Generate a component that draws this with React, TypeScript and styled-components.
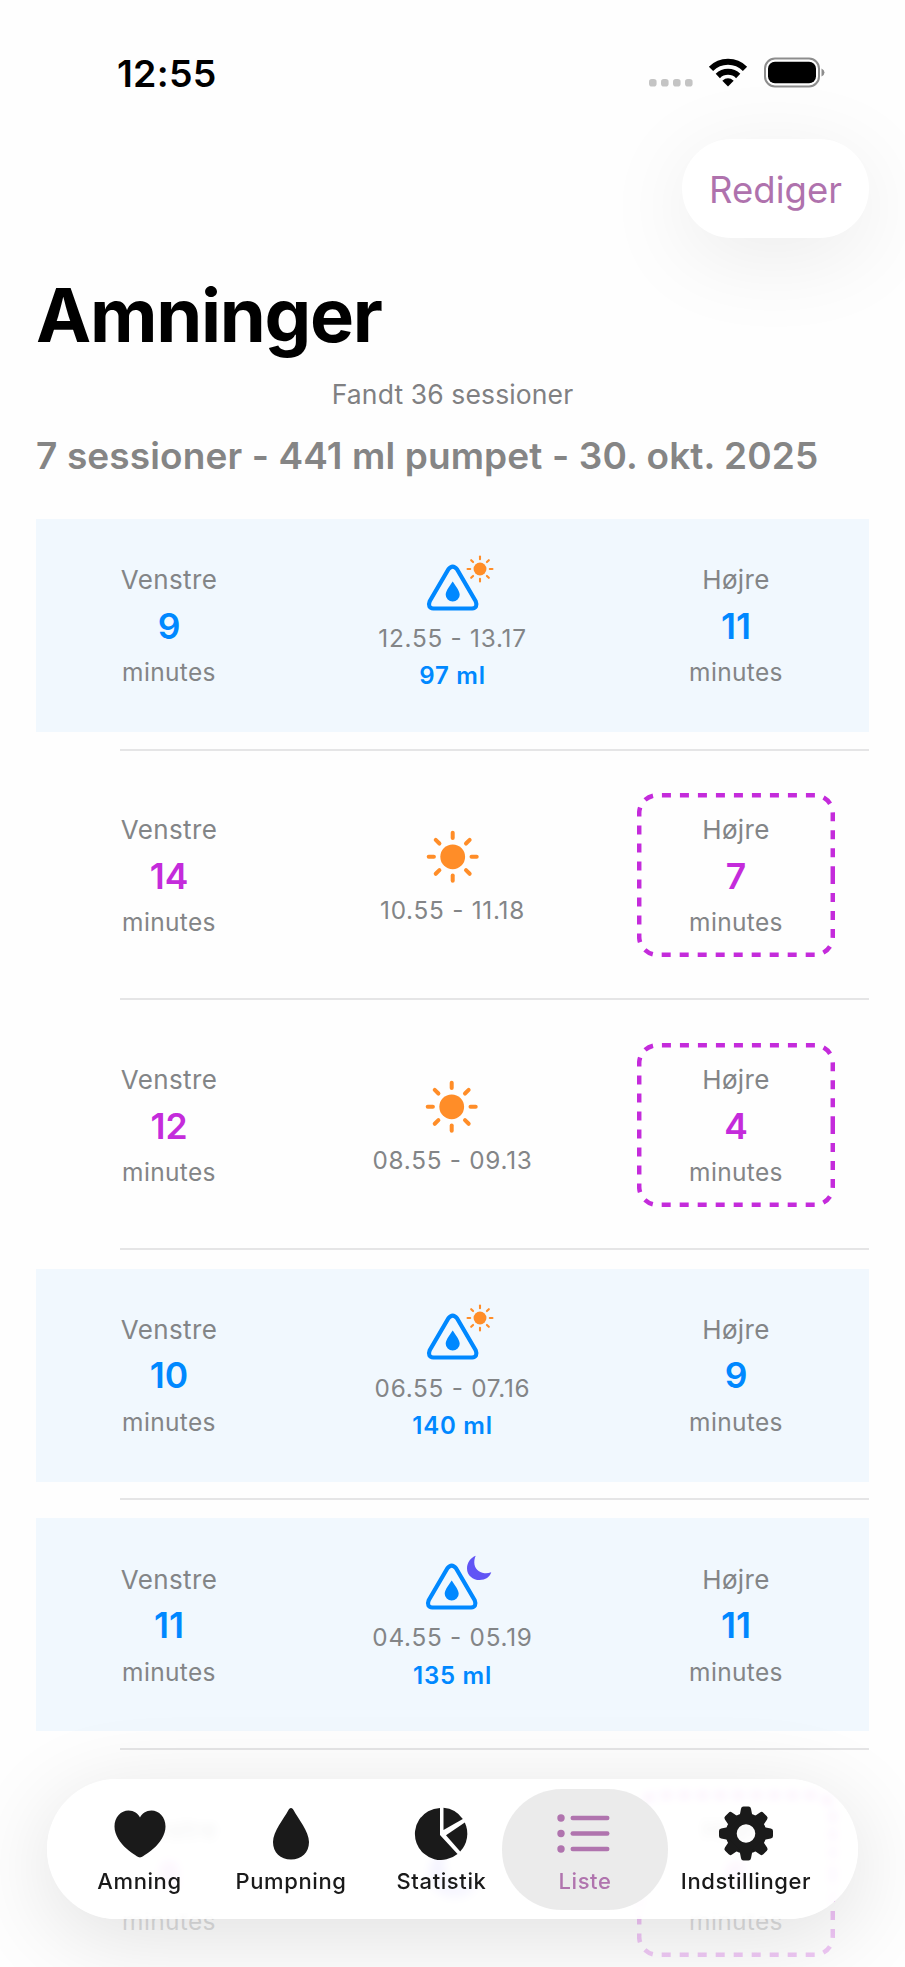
import React from 'react';
import styled, { createGlobalStyle } from 'styled-components';

const Global = createGlobalStyle`
  * { box-sizing: border-box; }
  body { margin: 0; background: #fff; font-family: Inter, "Liberation Sans", sans-serif; }
`;

const Screen = styled.main`
  position: relative;
  width: 905px;
  height: 1967px;
  overflow: hidden;
  background: #fefefe;
  color: #000;
`;

const StatusBar = styled.header`
  display: flex;
  justify-content: space-between;
  align-items: center;
  height: 139px;
  padding: 9px 80px 0 117px;
`;

const Clock = styled.span`
  font-size: 37.5px;
  line-height: 46px;
  font-weight: 600;
  letter-spacing: 0.25px;
`;

const Toolbar = styled.div`
  display: flex;
  justify-content: flex-end;
  padding-right: 36px;
`;

const EditButton = styled.button`
  width: 187px;
  height: 99px;
  padding: 2px 0 0;
  border: 0;
  border-radius: 50px;
  background: #fff;
  box-shadow: 0 18px 90px rgba(0, 0, 0, 0.08);
  color: #af72ad;
  font: 400 36.5px/46px Inter, sans-serif;
`;

const Title = styled.h1`
  margin: 32px 0 0 36px;
  font-size: 74px;
  line-height: 90px;
  font-weight: 700;
  letter-spacing: -1.3px;
`;

const Found = styled.p`
  margin: 18px 0 0;
  text-align: center;
  color: #808082;
  font-size: 26.5px;
  line-height: 32px;
  letter-spacing: 0.12px;
`;

const DayHeading = styled.h2`
  margin: 23px 0 0 36px;
  white-space: nowrap;
  color: #858585;
  font-size: 37px;
  line-height: 46px;
  font-weight: 600;
  letter-spacing: 0.12px;
`;

const List = styled.ul`
  list-style: none;
  margin: 22px 36px 0;
  padding: 0;
`;

const Item = styled.li`
  display: flex;
  flex-direction: column;
  height: 249.86px;
  padding-top: 18px;
`;

const Card = styled.div<{ $tinted: boolean }>`
  display: flex;
  justify-content: space-between;
  align-items: center;
  height: 213px;
  padding: 0 34px;
  background: ${(p) => (p.$tinted ? '#f1f8fe' : 'transparent')};
`;

const Divider = styled.div`
  height: 2px;
  margin: 16.5px 0 0 84px;
  background: #e5e5e6;
`;

const Side = styled.div`
  position: relative;
  display: flex;
  flex-direction: column;
  align-items: center;
  justify-content: center;
  gap: 6.4px;
  width: 198px;
  height: 164px;
  padding-top: 0.6px;
`;

const SideLabel = styled.span`
  color: #838587;
  font-size: 26px;
  line-height: 34px;
  letter-spacing: 0.35px;
`;

const Minutes = styled.span<{ $pump: boolean }>`
  color: ${(p) => (p.$pump ? '#0088ff' : '#c42bdb')};
  font-size: 35.5px;
  line-height: 46px;
  font-weight: 600;
`;

const Unit = styled.span`
  color: #838587;
  font-size: 24.5px;
  line-height: 32px;
  letter-spacing: 0.35px;
`;

const Outline = styled.svg`
  position: absolute;
  inset: 0;
`;

const Middle = styled.div`
  display: flex;
  flex-direction: column;
  align-items: center;
  gap: 6.3px;
`;

const Time = styled.span`
  color: #838587;
  font-size: 24.3px;
  line-height: 32px;
  letter-spacing: 0.75px;
`;

const Volume = styled.span`
  color: #0088ff;
  font-size: 24px;
  line-height: 32px;
  font-weight: 600;
  letter-spacing: 0.75px;
`;

const BottomFade = styled.div`
  position: absolute;
  inset: auto 0 0 0;
  height: 210px;
  background: linear-gradient(rgba(254, 254, 254, 0), rgba(254, 254, 254, 0.68) 60%, rgba(254, 254, 254, 0.76));
`;

const TabBar = styled.nav`
  position: absolute;
  left: 47px;
  bottom: 48px;
  display: flex;
  align-items: center;
  width: 811px;
  height: 140px;
  padding: 0 10px;
  border-radius: 70px;
  background: rgba(255, 255, 255, 0.84);
  backdrop-filter: blur(5px);
  box-shadow: 0 18px 90px rgba(0, 0, 0, 0.12);
`;

const Tab = styled.button<{ $active?: boolean; $width: number; $before?: number }>`
  flex: 0 0 auto;
  display: flex;
  flex-direction: column;
  align-items: center;
  width: ${(p) => p.$width}px;
  height: 121px;
  margin-left: ${(p) => p.$before ?? 0}px;
  padding: 18px 0 0;
  border: 0;
  border-radius: 60px;
  background: ${(p) => (p.$active ? 'rgba(234, 234, 234, 0.97)' : 'transparent')};
  color: ${(p) => (p.$active ? '#b074ae' : '#1a1a1a')};
  font: 500 22px/28px Inter, sans-serif;
  letter-spacing: 0.6px;
`;

const TabIcon = styled.svg`
  display: block;
  overflow: visible;
  margin-bottom: 6px;
`;

const RAYS = [0, 45, 90, 135, 180, 225, 270, 315];

function SunShape({ x, y, scale = 1 }: { x: number; y: number; scale?: number }) {
  return (
    <g transform={`translate(${x} ${y}) scale(${scale})`}>
      <circle r="12.4" fill="#ff8d28" />
      {RAYS.map((a) => (
        <line key={a} y1="-18.8" y2="-24" stroke="#ff8d28" strokeWidth="4" strokeLinecap="round" transform={`rotate(${a})`} />
      ))}
    </g>
  );
}

const MOON = 'M9 0 C4 2 0 7 0 13 C0 20 6 25 13 25 C19 25 23.500 22 25 17 C22.500 18 20 18.300 18 18 C12 17.500 7.500 13 7.500 7 C7.500 4.500 8 2 9 0 Z';

type Phase = 'day' | 'night';

const Glyph = styled.svg`
  display: block;
  overflow: visible;
`;

function PumpIcon({ phase }: { phase: Phase }) {
  return (
    <Glyph width="100" height="57" viewBox="0 0 100 57">
      <path d="M45.400 10.300 Q49.700 4.800 54 10.300 L72.700 42.300 Q75.200 48.800 69 49.500 H30.400 Q24.200 48.800 26.700 42.300 Z" fill="none" stroke="#0088ff" strokeWidth="4.200" strokeLinejoin="round" />
      <path d="M49.700 22.500 C51.200 25 56.700 31.500 56.700 35.700 A7 6.800 0 0 1 42.700 35.700 C42.700 31.500 48.200 25 49.700 22.500 Z" fill="#0088ff" />
      {phase === 'day' ? (
        <SunShape x={77} y={10} scale={0.52} />
      ) : (
        <path d={MOON} fill="#6155f5" transform="translate(65 -2.200) scale(.97)" />
      )}
    </Glyph>
  );
}

function FeedIcon({ phase }: { phase: Phase }) {
  return (
    <Glyph width="60" height="63" viewBox="0 0 60 63">
      {phase === 'day' ? <SunShape x={29.700} y={31.800} /> : <path d={MOON} fill="#6155f5" transform="translate(6 6) scale(1.950)" />}
    </Glyph>
  );
}

function DashedOutline() {
  return (
    <Outline width="198" height="164" viewBox="0 0 198 164" fill="none">
      <path
        d="M195.800 82 V143.800 A18 18 0 0 1 177.800 161.800 H20.200 A18 18 0 0 1 2.200 143.800 V20.200 A18 18 0 0 1 20.200 2.200 H177.800 A18 18 0 0 1 195.800 20.200 Z"
        stroke="#c42bdb"
        strokeWidth="4.500"
        strokeDasharray="9 9"
      />
    </Outline>
  );
}

interface Session {
  left: number;
  right: number;
  time: string;
  phase: Phase;
  volume?: string;
}

const sessions: Session[] = [
  { left: 9, right: 11, time: '12.55 - 13.17', phase: 'day', volume: '97 ml' },
  { left: 14, right: 7, time: '10.55 - 11.18', phase: 'day' },
  { left: 12, right: 4, time: '08.55 - 09.13', phase: 'day' },
  { left: 10, right: 9, time: '06.55 - 07.16', phase: 'day', volume: '140 ml' },
  { left: 11, right: 11, time: '04.55 - 05.19', phase: 'night', volume: '135 ml' },
  { left: 8, right: 6, time: '', phase: 'night' },
];

function SessionRow({ left, right, time, phase, volume }: Session) {
  const pump = Boolean(volume);
  return (
    <Item>
      <Card $tinted={pump}>
        <Side>
          <SideLabel>Venstre</SideLabel>
          <Minutes $pump={pump}>{left}</Minutes>
          <Unit>minutes</Unit>
        </Side>
        <Middle>
          {pump ? <PumpIcon phase={phase} /> : <FeedIcon phase={phase} />}
          {time && <Time>{time}</Time>}
          {volume && <Volume>{volume}</Volume>}
        </Middle>
        <Side>
          {!pump && <DashedOutline />}
          <SideLabel>Højre</SideLabel>
          <Minutes $pump={pump}>{right}</Minutes>
          <Unit>minutes</Unit>
        </Side>
      </Card>
      <Divider />
    </Item>
  );
}

function StatusIcons() {
  return (
    <svg width="180" height="40" viewBox="0 0 180 40">
      {[8, 20, 32, 44].map((x) => (
        <rect key={x} x={x - 4} y="25" width="7.600" height="7.600" rx="2.800" fill="#c4c4c4" />
      ))}
      <g fill="none" stroke="#000" strokeWidth="6">
        <path d="M66 14.800 A24 24 0 0 1 100 14.800" />
        <path d="M72.800 22 A14.500 14.500 0 0 1 93.200 22" />
      </g>
      <path d="M83 32.500 L77.300 26.700 Q83 22 88.700 26.700 Z" />
      <rect x="120" y="4.500" width="54" height="28" rx="10" fill="none" stroke="#8d8d8d" strokeWidth="2" />
      <rect x="123" y="7.800" width="48" height="21.400" rx="7" />
      <path d="M176.500 14.500 Q179.500 15.800 179.500 18.500 Q179.500 21.200 176.500 22.500 Z" fill="#8d8d8d" />
    </svg>
  );
}

function Heart() {
  return (
    <TabIcon width="54" height="54" viewBox="0 0 54 54" fill="currentColor">
      <path d="M27 50.500 C25 50.500 1.500 37 1.500 19.500 C1.500 10 8 3.500 15.500 3.500 C21 3.500 25 6.500 27 10.500 C29 6.500 33 3.500 38.500 3.500 C46 3.500 52.500 10 52.500 19.500 C52.500 37 29 50.500 27 50.500 Z" />
    </TabIcon>
  );
}

function Drop() {
  return (
    <TabIcon width="54" height="54" viewBox="0 0 54 54" fill="currentColor">
      <path d="M27 1 C28.300 1 29 2.100 29.800 3.500 C34 11.500 45 24.500 45 35 C45 45.500 37.500 52.500 27 52.500 C16.500 52.500 9 45.500 9 35 C9 24.500 20 11.500 24.200 3.500 C25 2.100 25.700 1 27 1 Z" />
    </TabIcon>
  );
}

function Pie() {
  return (
    <TabIcon width="54" height="54" viewBox="0 0 54 54" fill="currentColor">
      <path d="M25 1 V28 L42.500 47 A26 26 0 1 1 25 1 Z" />
      <path d="M28.500 0.800 A26 26 0 0 1 47.800 12 L28.500 23 Z" />
      <path d="M49.800 15.500 A26 26 0 0 1 45.200 44.500 L31 28.300 Z" />
    </TabIcon>
  );
}

function ListIcon() {
  return (
    <TabIcon width="54" height="54" viewBox="1 0 54 54" fill="currentColor">
      {[11, 26.5, 42].map((y) => (
        <g key={y}>
          <circle cx="4" cy={y} r="3.700" />
          <rect x="13.500" y={y - 2.200} width="39" height="4.400" rx="2.200" />
        </g>
      ))}
    </TabIcon>
  );
}

function Gear() {
  return (
    <TabIcon width="54" height="54" viewBox="0 0.500 54 54" fill="currentColor">
      <circle cx="27" cy="27" r="14.800" fill="none" stroke="currentColor" strokeWidth="11" />
      {RAYS.map((a) => (
        <path key={a} d="M20.300 11 L22 2.200 Q22.400 0 24.500 0 H29.500 Q31.600 0 32 2.200 L33.700 11 Z" transform={`rotate(${a} 27 27)`} />
      ))}
    </TabIcon>
  );
}

export default function App() {
  return (
    <Screen>
      <Global />
      <StatusBar>
        <Clock>12:55</Clock>
        <StatusIcons />
      </StatusBar>
      <Toolbar>
        <EditButton>Rediger</EditButton>
      </Toolbar>
      <Title>Amninger</Title>
      <Found>Fandt 36 sessioner</Found>
      <DayHeading>7 sessioner - 441 ml pumpet - 30. okt. 2025</DayHeading>
      <List>
        {sessions.map((s, i) => (
          <SessionRow key={i} {...s} />
        ))}
      </List>
      <BottomFade />
      <TabBar>
        <Tab $width={165}><Heart />Amning</Tab>
        <Tab $width={138}><Drop />Pumpning</Tab>
        <Tab $width={121} $before={21}><Pie />Statistik</Tab>
        <Tab $width={166} $active><ListIcon />Liste</Tab>
        <Tab $width={156}><Gear />Indstillinger</Tab>
      </TabBar>
    </Screen>
  );
}
